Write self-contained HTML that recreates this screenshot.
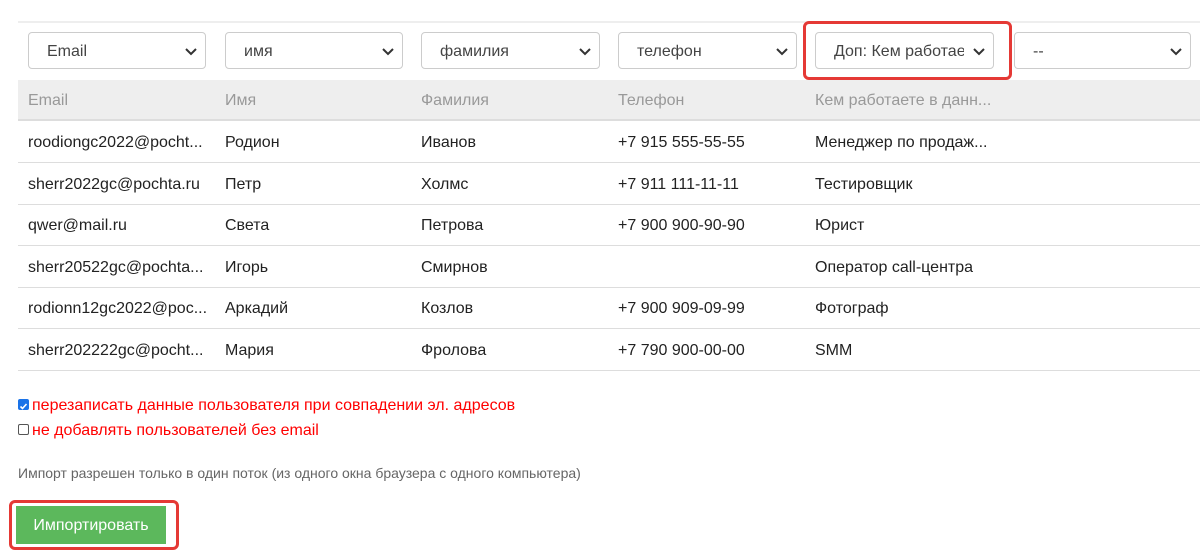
<!DOCTYPE html>
<html><head><meta charset="utf-8"><style>
body{margin:0;width:1200px;height:552px;background:#fff;font-family:"Liberation Sans",sans-serif;position:relative;overflow:hidden;color:#222}
.a{position:absolute}
.sel{position:absolute;top:32px;height:37px;border:1px solid #ccc;border-radius:4px;box-sizing:border-box;font-size:16px;color:#444;line-height:38px;padding-left:18px;background:#fff}
.sel svg{position:absolute;right:8px;top:15px}
.row{position:absolute;left:18px;width:1182px;height:41px;border-bottom:1px solid #ddd;font-size:16px}
.row span{position:absolute;top:13px;white-space:nowrap}
</style></head><body>
<div class="a" style="left:18px;top:21px;width:1182px;height:2px;background:#eee"></div>
<div class="sel" style="left:28px;width:178px">Email<svg width="12" height="8"><path d="M1 1l5 5 5-5" stroke="#333" stroke-width="2" fill="none"/></svg></div>
<div class="sel" style="left:225px;width:178px">имя<svg width="12" height="8"><path d="M1 1l5 5 5-5" stroke="#333" stroke-width="2" fill="none"/></svg></div>
<div class="sel" style="left:421px;width:179px">фамилия<svg width="12" height="8"><path d="M1 1l5 5 5-5" stroke="#333" stroke-width="2" fill="none"/></svg></div>
<div class="sel" style="left:618px;width:179px">телефон<svg width="12" height="8"><path d="M1 1l5 5 5-5" stroke="#333" stroke-width="2" fill="none"/></svg></div>
<div class="sel" style="left:815px;width:179px;overflow:hidden"><span style="display:inline-block;width:130px;overflow:hidden;white-space:nowrap;vertical-align:top">Доп: Кем работает</span><svg width="12" height="8"><path d="M1 1l5 5 5-5" stroke="#333" stroke-width="2" fill="none"/></svg></div>
<div class="sel" style="left:1014px;width:177px">--<svg width="12" height="8"><path d="M1 1l5 5 5-5" stroke="#333" stroke-width="2" fill="none"/></svg></div>
<div class="a" style="left:803px;top:21px;width:203px;height:53px;border:3px solid #e53935;border-radius:6px"></div>
<div class="row" style="top:80px;height:39px;background:#eee;color:#999;border-bottom:2px solid #ddd"><span style="left:10px;top:12px">Email</span><span style="left:207px;top:12px">Имя</span><span style="left:403px;top:12px">Фамилия</span><span style="left:600px;top:12px">Телефон</span><span style="left:797px;top:12px">Кем работаете в данн...</span></div>
<div class="row" style="top:121px"><span style="left:10px">roodiongc2022@pocht...</span><span style="left:207px">Родион</span><span style="left:403px">Иванов</span><span style="left:600px">+7 915 555-55-55</span><span style="left:797px">Менеджер по продаж...</span></div>
<div class="row" style="top:163px"><span style="left:10px">sherr2022gc@pochta.ru</span><span style="left:207px">Петр</span><span style="left:403px">Холмс</span><span style="left:600px">+7 911 111-11-11</span><span style="left:797px">Тестировщик</span></div>
<div class="row" style="top:204px"><span style="left:10px">qwer@mail.ru</span><span style="left:207px">Света</span><span style="left:403px">Петрова</span><span style="left:600px">+7 900 900-90-90</span><span style="left:797px">Юрист</span></div>
<div class="row" style="top:246px"><span style="left:10px">sherr20522gc@pochta...</span><span style="left:207px">Игорь</span><span style="left:403px">Смирнов</span><span style="left:797px">Оператор call-центра</span></div>
<div class="row" style="top:287px"><span style="left:10px">rodionn12gc2022@poc...</span><span style="left:207px">Аркадий</span><span style="left:403px">Козлов</span><span style="left:600px">+7 900 909-09-99</span><span style="left:797px">Фотограф</span></div>
<div class="row" style="top:329px"><span style="left:10px">sherr202222gc@pocht...</span><span style="left:207px">Мария</span><span style="left:403px">Фролова</span><span style="left:600px">+7 790 900-00-00</span><span style="left:797px">SMM</span></div>
<div class="a" style="left:18px;top:399px;width:11px;height:11px;background:#1a73e8;border-radius:2px"><svg width="11" height="11"><path d="M2.5 5.5l2 2 4-4.5" stroke="#fff" stroke-width="1.6" fill="none"/></svg></div>
<div class="a" style="left:32px;top:397px;font-size:16px;color:#f00">перезаписать данные пользователя при совпадении эл. адресов</div>
<div class="a" style="left:18px;top:424px;width:9px;height:9px;border:1px solid #555;border-radius:2px"></div>
<div class="a" style="left:32px;top:422px;font-size:16px;color:#f00">не добавлять пользователей без email</div>
<div class="a" style="left:18px;top:465px;font-size:14px;color:#666">Импорт разрешен только в один поток (из одного окна браузера с одного компьютера)</div>
<div class="a" style="left:9px;top:500px;width:164px;height:44px;border:3px solid #e53935;border-radius:6px"></div>
<div class="a" style="left:16px;top:506px;width:150px;height:38px;background:#5cb85c;color:#fff;font-size:16px;line-height:40px;text-align:center">Импортировать</div>
</body></html>
